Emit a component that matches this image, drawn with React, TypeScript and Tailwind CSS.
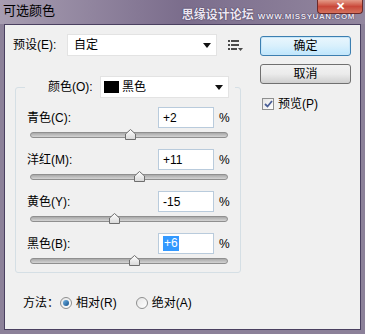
import React from "react";

const FONT = { fontFamily: '"Liberation Sans", "Noto Sans CJK SC", sans-serif' };

const rows = [
  { label: "青色(C):", value: 2 },
  { label: "洋红(M):", value: 11 },
  { label: "黄色(Y):", value: -15 },
  { label: "黑色(B):", value: 6, selected: true },
];

function Arrow() {
  return (
    <svg width="8" height="5" viewBox="0 0 8 5">
      <path d="M0 0h8L4 5z" fill="#111" />
    </svg>
  );
}

function ListIcon() {
  return (
    <svg width="15" height="12" viewBox="0 0 15 12">
      <g fill="#4a4a4a">
        <rect x="0" y="0" width="2" height="2" />
        <rect x="3" y="0" width="8" height="2" />
        <rect x="0" y="4" width="2" height="2" />
        <rect x="3" y="4" width="8" height="2" />
        <rect x="0" y="8" width="2" height="2" />
        <rect x="3" y="8" width="6" height="2" />
        <path d="M10 8h5l-2.5 3z" />
      </g>
    </svg>
  );
}

function Thumb() {
  return (
    <svg width="11" height="11" viewBox="0 0 11 11">
      <defs>
        <linearGradient id="tg" x1="0" y1="0" x2="0" y2="1">
          <stop offset="0" stopColor="#ffffff" />
          <stop offset="1" stopColor="#d8d8d8" />
        </linearGradient>
      </defs>
      <path d="M5.5 0.5 10.5 5v5.5H0.5V5z" fill="url(#tg)" stroke="#6e6e6e" />
    </svg>
  );
}

function Slider({ value }: { value: number }) {
  const left = 99 + value * 0.99 - 5.5;
  return (
    <div className="relative ml-[3px] w-[198px] h-[14px]">
      <div className="absolute left-0 right-0 top-[4px] h-[6px] rounded-full border border-[#8f8f8f] bg-gradient-to-b from-[#a9a9a9] to-[#d4d4d4]" />
      <div className="absolute top-[1px]" style={{ left }}>
        <Thumb />
      </div>
    </div>
  );
}

function Radio({ checked }: { checked?: boolean }) {
  return (
    <span className="w-[12px] h-[12px] rounded-full border border-[#8e8f8f] bg-gradient-to-br from-[#e6e6e6] to-[#ffffff] flex items-center justify-center">
      {checked && (
        <span className="w-[6px] h-[6px] rounded-full bg-gradient-to-br from-[#6fb3e6] to-[#15528a]" />
      )}
    </span>
  );
}

export default function App() {
  return (
    <div
      className="w-[365px] h-[334px] overflow-hidden flex flex-col bg-[#8c8199] text-[12px] text-black"
      style={FONT}
    >
      {/* title bar */}
      <div className="relative h-[24px] flex items-start bg-gradient-to-r from-[#a79db1] via-[#7b6d8c] to-[#93879f]">
        <span className="ml-[3px] mt-[3px] text-[13px] leading-[16px]">可选颜色</span>
        <div className="flex-1" />
        <div className="mt-[9px] mr-[10px] flex items-end gap-[4px]">
          <span
            className="text-[12px] leading-[13px] font-bold text-[#ece6f2]"
            style={{ textShadow: "0 0 1px #3b3050, 0 0 1px #3b3050" }}
          >
            思缘设计论坛
          </span>
          <span
            className="text-[8px] leading-[8px] font-bold text-[#ece6f2] tracking-[0.6px] mb-[1px]"
            style={{ textShadow: "0 0 1px #3b3050, 0 0 1px #3b3050" }}
          >
            WWW.MISSYUAN.COM
          </span>
        </div>
        <div className="absolute left-[317px] top-0 w-[46px] h-[14px] rounded-b-[4px] border border-t-0 border-[#6b2a2a] bg-gradient-to-b from-[#e39a88] via-[#c9483a] to-[#d4705c] flex items-center justify-center text-white font-bold text-[11px] leading-none">
          ✕
        </div>
      </div>

      {/* body */}
      <div className="flex-1 mx-[4px] mb-[4px] border border-[#4a4060] bg-[#f0f0f0] flex">
        {/* left column */}
        <div className="w-[240px] pl-[8px] pt-[9px]">
          <div className="flex items-center h-[22px]">
            <span className="w-[54px]">预设(E):</span>
            <div className="w-[150px] h-[22px] bg-white border border-[#e3e3e3] flex items-center pl-[6px] pr-[5px]">
              <span className="flex-1">自定</span>
              <Arrow />
            </div>
            <span className="ml-[11px] mt-[2px]">
              <ListIcon />
            </span>
          </div>

          <fieldset className="mt-[20px] ml-[2px] w-[226px] min-w-0 border border-[#d5dfe5] rounded-[3px] pl-[11px] pr-[10px] pb-[4px]">
            <legend className="-ml-[2px] pl-[23px] pr-[6px] flex items-center">
              <span className="w-[52px]">颜色(O):</span>
              <div className="w-[129px] h-[22px] bg-white border border-[#e3e3e3] flex items-center pl-[3px] pr-[5px]">
                <span className="w-[15px] h-[12px] bg-black mr-[3px]" />
                <span className="flex-1">黑色</span>
                <Arrow />
              </div>
            </legend>
            <div className="pt-[9px] flex flex-col gap-[7px]">
              {rows.map((r) => (
                <div key={r.label}>
                  <div className="flex items-center h-[21px]">
                    <span className="flex-1">{r.label}</span>
                    <div className="w-[56px] h-[21px] bg-white border border-[#b9cbdc] flex items-center pl-[4px]">
                      {r.selected ? (
                        <span className="bg-[#3399ff] text-white leading-[15px] px-[1px]">+{r.value}</span>
                      ) : (
                        <span>{r.value > 0 ? `+${r.value}` : r.value}</span>
                      )}
                    </div>
                    <span className="ml-[5px] w-[11px]">%</span>
                  </div>
                  <Slider value={r.value} />
                </div>
              ))}
            </div>
          </fieldset>

          <div className="mt-[22px] ml-[10px] flex items-center h-[16px]">
            <span className="mr-[1px]">方法：</span>
            <Radio checked />
            <span className="ml-[4px]">相对(R)</span>
            <span className="ml-[19px]">
              <Radio />
            </span>
            <span className="ml-[4px]">绝对(A)</span>
          </div>
        </div>

        {/* right column */}
        <div className="ml-[15px] pt-[11px] w-[91px] flex flex-col">
          <div className="h-[20px] rounded-[3px] border border-[#3c7fb1] bg-gradient-to-b from-[#eaf6fd] via-[#d9f0fc] to-[#bee6fd] shadow-[inset_0_0_0_1px_#c8e6f8] flex items-center justify-center">
            确定
          </div>
          <div className="mt-[8px] h-[20px] rounded-[3px] border border-[#707070] bg-gradient-to-b from-[#f2f2f2] via-[#ebebeb] to-[#cfcfcf] flex items-center justify-center">
            取消
          </div>
          <div className="mt-[12px] ml-[2px] flex items-center h-[15px]">
            <span className="w-[12px] h-[12px] border border-[#8e8f8f] bg-gradient-to-br from-[#e4e4e4] to-white flex items-center justify-center">
              <svg width="9" height="8" viewBox="0 0 9 8">
                <path d="M1 4l2.5 2.5L8 1" fill="none" stroke="#4a5f97" strokeWidth="1.8" />
              </svg>
            </span>
            <span className="ml-[4px]">预览(P)</span>
          </div>
        </div>
      </div>
    </div>
  );
}
